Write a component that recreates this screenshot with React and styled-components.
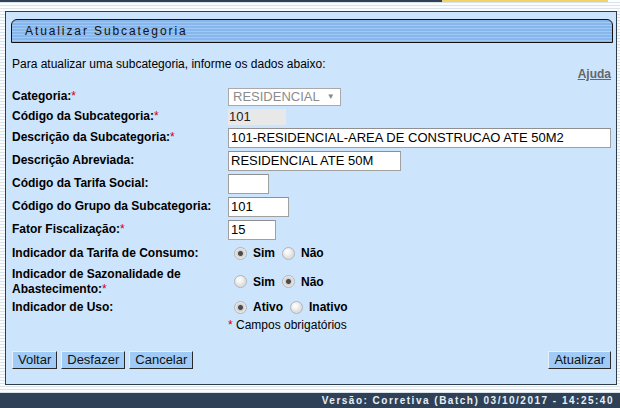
import React from "react";
import styled, { createGlobalStyle } from "styled-components";

const GlobalStyle = createGlobalStyle`
  html, body {
    margin: 0;
    padding: 0;
  }
  body {
    width: 620px;
    height: 408px;
    overflow: hidden;
    font-family: "Liberation Sans", Arial, sans-serif;
    font-size: 12px;
    color: #000;
    background: repeating-linear-gradient(
      to bottom,
      #fbfcfd 0px,
      #fbfcfd 2px,
      #dbe3ea 2px,
      #dbe3ea 3px
    );
  }
`;

const Page = styled.div`
  display: flex;
  flex-direction: column;
  height: 408px;
`;

const TopStrip = styled.div`
  display: flex;
  height: 2px;
`;

const StripSegment = styled.div`
  width: ${(p) => p.$width}px;
  background: ${(p) => p.$color};
`;

const Panel = styled.div`
  margin: 9px 3px 0 5px;
  border: 1px solid #2f3d4b;
  background: #cce4fc;
  padding: 7px 5px 15px 6px;
`;

const TitleBar = styled.div`
  margin: 0 -2px 0 -1px;
  height: 22px;
  border: 1px solid #111;
  border-radius: 6px 6px 0 0;
  background: repeating-linear-gradient(
    to bottom,
    #86b6ee 0px,
    #86b6ee 2px,
    #a2c9f4 2px,
    #a2c9f4 3px
  );
  display: flex;
  align-items: center;
  padding-left: 13px;
  font-size: 12px;
  letter-spacing: 1.9px;
  color: #111;
`;

const HeaderRow = styled.div`
  margin-top: 14px;
  height: 24px;
  display: flex;
  justify-content: space-between;
`;

const Intro = styled.div`
  align-self: flex-start;
  line-height: 14px;
`;

const HelpLink = styled.a`
  align-self: flex-end;
  line-height: 14px;
  font-weight: bold;
  color: #666;
  text-decoration: underline;
`;

const Form = styled.div`
  margin-top: 7px;
  display: grid;
  grid-template-columns: 216px 1fr;
  row-gap: 3px;
  align-items: center;
`;

const Label = styled.div`
  font-weight: bold;
  line-height: 15px;
`;

const Req = styled.span`
  color: #d40000;
  font-weight: normal;
`;

const Select = styled.div`
  width: 113px;
  height: 18px;
  box-sizing: border-box;
  border: 1px solid #a9a9a9;
  background: #fff;
  color: #8c8c8c;
  font-size: 13px;
  display: flex;
  align-items: center;
  gap: 7px;
  padding: 0 4px;
`;

const Arrow = styled.span`
  font-size: 8px;
  color: #888;
`;

const ReadOnly = styled.div`
  width: 57px;
  height: 16px;
  background: #e8e8e8;
  font-size: 13px;
  line-height: 16px;
  padding-left: 1px;
  color: #222;
`;

const TextInput = styled.input`
  width: ${(p) => p.$w}px;
  height: 20px;
  box-sizing: border-box;
  margin: 0;
  border: 1px solid #a0a0a0;
  border-top-color: #8f8f8f;
  background: #fff;
  font-family: "Liberation Sans", Arial, sans-serif;
  font-size: 13px;
  color: #000;
  padding: 0 2px;
  outline: none;
`;

const RadioGroup = styled.div`
  display: flex;
  align-items: center;
  height: ${(p) => p.$h || 20}px;
`;

const Option = styled.label`
  display: flex;
  align-items: center;
  gap: 6px;
  margin-left: ${(p) => (p.$first ? 6 : 7)}px;
  font-weight: bold;
`;

const Radio = styled.span`
  width: 11px;
  height: 11px;
  border-radius: 50%;
  border: 1px solid #b4b4b4;
  background: ${(p) =>
    p.$checked
      ? "radial-gradient(circle at center, #4b4b4b 0px, #4b4b4b 2px, #cfcfcf 3px, #f4f4f4 6px)"
      : "radial-gradient(circle at 40% 35%, #ffffff 0px, #f2f2f2 3px, #dedede 6px)"};
`;

const Note = styled.div`
  grid-column: 2;
  line-height: 15px;
`;

const Buttons = styled.div`
  margin-top: 18px;
  display: flex;
  gap: 4px;
`;

const Button = styled.button`
  height: 18px;
  margin: 0;
  padding: 0 5px;
  background: #a0cbf7;
  border: 1px solid;
  border-color: #e6f1fd #2a2a2a #2a2a2a #e6f1fd;
  font-family: "Liberation Sans", Arial, sans-serif;
  font-size: 13px;
  line-height: 14px;
  color: #111;
  margin-left: ${(p) => (p.$push ? "auto" : "0")};
`;

const Footer = styled.div`
  margin-top: 8px;
  height: 18px;
  background: #2e4157;
  color: #e8eef4;
  font-size: 10px;
  font-weight: bold;
  letter-spacing: 1.5px;
  display: flex;
  align-items: center;
  justify-content: flex-end;
  padding-right: 6px;
`;

function RadioSet({ options, checked, h }) {
  return (
    <RadioGroup $h={h}>
      {options.map((o, i) => (
        <Option key={o} $first={i === 0}>
          <Radio $checked={o === checked} />
          {o}
        </Option>
      ))}
    </RadioGroup>
  );
}

export default function App() {
  return (
    <Page>
      <GlobalStyle />
      <TopStrip>
        <StripSegment $width={442} $color="#2e4157" />
        <StripSegment $width={166} $color="#f1d36c" />
      </TopStrip>
      <Panel>
        <TitleBar>Atualizar Subcategoria</TitleBar>
        <HeaderRow>
          <Intro>Para atualizar uma subcategoria, informe os dados abaixo:</Intro>
          <HelpLink>Ajuda</HelpLink>
        </HeaderRow>
        <Form>
          <Label>
            Categoria:<Req>*</Req>
          </Label>
          <Select>
            RESIDENCIAL<Arrow>▼</Arrow>
          </Select>

          <Label>
            Código da Subcategoria:<Req>*</Req>
          </Label>
          <ReadOnly>101</ReadOnly>

          <Label>
            Descrição da Subcategoria:<Req>*</Req>
          </Label>
          <TextInput $w={383} defaultValue="101-RESIDENCIAL-AREA DE CONSTRUCAO ATE 50M2" />

          <Label>Descrição Abreviada:</Label>
          <TextInput $w={173} defaultValue="RESIDENCIAL ATE 50M" />

          <Label>Código da Tarifa Social:</Label>
          <TextInput $w={41} defaultValue="" />

          <Label>Código do Grupo da Subcategoria:</Label>
          <TextInput $w={61} defaultValue="101" />

          <Label>
            Fator Fiscalização:<Req>*</Req>
          </Label>
          <TextInput $w={48} defaultValue="15" />

          <Label>Indicador da Tarifa de Consumo:</Label>
          <RadioSet options={["Sim", "Não"]} checked="Sim" h={21} />

          <Label>
            Indicador de Sazonalidade de
            <br />
            Abastecimento:<Req>*</Req>
          </Label>
          <RadioSet options={["Sim", "Não"]} checked="Não" h={28} />

          <Label>Indicador de Uso:</Label>
          <RadioSet options={["Ativo", "Inativo"]} checked="Ativo" h={15} />

          <Note>
            <Req>*</Req> Campos obrigatórios
          </Note>
        </Form>
        <Buttons>
          <Button>Voltar</Button>
          <Button>Desfazer</Button>
          <Button>Cancelar</Button>
          <Button $push>Atualizar</Button>
        </Buttons>
      </Panel>
      <Footer>Versão: Corretiva (Batch) 03/10/2017 - 14:25:40</Footer>
    </Page>
  );
}
